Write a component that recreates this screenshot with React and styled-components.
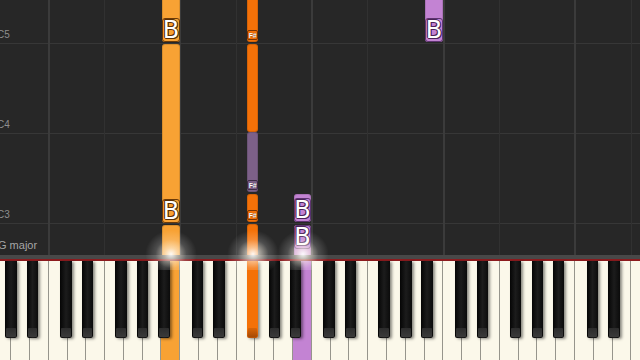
import React from "react";
import styled, { createGlobalStyle } from "styled-components";

// key geometry, measured off the reference
const W = 18.8;
const X0 = -7.7;
const NAMES = ["G", "A", "B", "C", "D", "E", "F"];
const BLACK_SHIFT = { G: 0, A: 2.4, C: -1.5, D: 1.2, F: -3 };
const BW = 11.5;

const ORANGE = { fill: "#f8a234", edge: "#6b3a08", ink: "#5a3006" };
const DARK = { fill: "#f47108", edge: "#7a3300", ink: "#4a1e00" };
const MAUVE = { fill: "#7c6088", edge: "#3e2c46", ink: "#2c1e33" };
const PURPLE = { fill: "#c383d3", edge: "#5e3470", ink: "#4a2458" };

const wx = (i) => X0 + i * W;
const bx = (i) => wx(i + 1) + BLACK_SHIFT[NAMES[i % 7]] - BW / 2;

const notes = [
  { x: wx(9), w: W, top: -6, bottom: 42, c: ORANGE, tag: "B" },
  { x: wx(9), w: W, top: 44, bottom: 223, c: ORANGE, tag: "B" },
  { x: wx(9), w: W, top: 225, bottom: 262, c: ORANGE },
  { x: bx(13), w: BW, top: -6, bottom: 42, c: DARK, small: "F#" },
  { x: bx(13), w: BW, top: 44, bottom: 132, c: DARK },
  { x: bx(13), w: BW, top: 132, bottom: 192, c: MAUVE, small: "F#" },
  { x: bx(13), w: BW, top: 194, bottom: 222, c: DARK, small: "F#" },
  { x: bx(13), w: BW, top: 224, bottom: 262, c: DARK },
  { x: wx(16), w: W, top: 194, bottom: 222, c: PURPLE, tag: "B" },
  { x: wx(16), w: W, top: 225, bottom: 262, c: PURPLE, tag: "B", tagTop: true },
  { x: wx(23), w: W, top: -6, bottom: 42, c: PURPLE, tag: "B" },
];

const lit = { 9: ORANGE.fill, 16: PURPLE.fill };
const litBlack = { 13: DARK.fill };

const glows = [wx(9) + W / 2, bx(13) + BW / 2, wx(16) + W / 2];

const bands = [
  { h: 44, label: "C5" },
  { h: 90, label: "C4" },
  { h: 90, label: "C3" },
];

const GlobalStyle = createGlobalStyle`
  html, body { margin: 0; padding: 0; background: #262626; }
  body { font-family: "Liberation Sans", Arial, sans-serif; }
`;

const Stage = styled.div`
  position: relative;
  width: 640px;
  height: 360px;
  overflow: hidden;
  display: flex;
  flex-direction: column;
  background: #272727;
`;

const Roll = styled.div`
  position: relative;
  flex: 0 0 255px;
  overflow: hidden;
`;

const Bands = styled.div`
  position: absolute;
  inset: 0;
  display: flex;
  flex-direction: column;
`;

const Band = styled.div`
  flex: 0 0 ${(p) => (p.$h ? `${p.$h}px` : "auto")};
  ${(p) => !p.$h && "flex: 1;"}
  box-sizing: border-box;
  display: flex;
  align-items: flex-end;
  border-bottom: ${(p) => (p.$h ? "1px solid #373737" : "none")};
  padding: 0 0 ${(p) => (p.$h ? 3 : 4)}px 0;
`;

const RowLabel = styled.span`
  margin-left: -3px;
  font-size: 10px;
  color: #8e8e8e;
  line-height: 1;
`;

const KeyName = styled.span`
  margin-left: -2px;
  font-size: 11px;
  color: #a6a6a6;
  line-height: 1;
`;

const VLine = styled.div`
  position: absolute;
  top: 0;
  bottom: 0;
  width: ${(p) => (p.$strong ? 2 : 1)}px;
  background: ${(p) => (p.$strong ? "#3b3b3b" : "#313131")};
`;

const Note = styled.div`
  position: absolute;
  box-sizing: border-box;
  border-radius: 3px;
  background: ${(p) => p.$c.fill};
  box-shadow: inset 0 0 0 1px rgba(0, 0, 0, 0.12);
`;

const Tag = styled.div`
  position: absolute;
  left: 0;
  right: 0;
  ${(p) => (p.$top ? "top: 0;" : "bottom: 0;")}
  height: 24px;
  box-sizing: border-box;
  border: 1.5px solid ${(p) => p.$c.edge};
  border-radius: 3px;
  background: ${(p) => p.$c.fill};
  display: flex;
  align-items: center;
  justify-content: center;
  font: 400 24px/1 "DejaVu Sans", sans-serif;
  color: #fff;
  text-shadow: 1px 0 0 ${(p) => p.$c.ink}, -1px 0 0 ${(p) => p.$c.ink},
    0 1px 0 ${(p) => p.$c.ink}, 0 -1px 0 ${(p) => p.$c.ink},
    1px 1px 0 ${(p) => p.$c.ink}, -1px -1px 0 ${(p) => p.$c.ink};
`;

const SmallTag = styled.div`
  position: absolute;
  left: 0;
  right: 0;
  bottom: 2px;
  height: 10px;
  box-sizing: border-box;
  border: 1px solid ${(p) => p.$c.edge};
  border-radius: 2px;
  background: ${(p) => p.$c.fill};
  display: flex;
  align-items: center;
  justify-content: center;
  font: 700 7px "Liberation Sans", sans-serif;
  letter-spacing: -0.3px;
  color: #fff;
  text-shadow: 0 0 1px ${(p) => p.$c.ink};
`;

const Strip = styled.div`
  flex: 0 0 4px;
  background: #484848;
  border-bottom: 2px solid #8c1b1e;
`;

const Keyboard = styled.div`
  position: relative;
  flex: 1;
  display: flex;
  background: #fbf8ea;
`;

const WhiteKey = styled.div`
  flex: 0 0 ${W}px;
  box-sizing: border-box;
  height: 100%;
  border-right: 1px solid #96958c;
  background: ${(p) => p.$lit || "#fbf8ea"};
  &:first-child {
    margin-left: ${X0}px;
  }
`;

const BlackKey = styled.div`
  position: absolute;
  top: 0;
  width: ${BW}px;
  height: 77px;
  border-radius: 0 0 2px 2px;
  background: ${(p) =>
    p.$lit
      ? `linear-gradient(${p.$lit}, ${p.$lit} 88%, #b85206)`
      : "linear-gradient(90deg, #050505, #1c1c1c 50%, #0b0b0b)"};
  box-shadow: 2px 1px 3px rgba(0, 0, 0, 0.45);
  &::after {
    content: "";
    position: absolute;
    left: 1px;
    right: 1px;
    bottom: 1px;
    height: 9px;
    border-radius: 1px;
    background: ${(p) =>
      p.$lit ? "rgba(0,0,0,0.12)" : "linear-gradient(#2c2c2c, #3a3a3a)"};
  }
`;

const Glow = styled.div`
  position: absolute;
  top: 230px;
  width: 52px;
  height: 40px;
  margin-left: -26px;
  pointer-events: none;
  background: radial-gradient(
    ellipse at 50% 60%,
    rgba(255, 255, 255, 0.95) 0,
    rgba(255, 248, 235, 0.6) 18%,
    rgba(255, 255, 255, 0.18) 42%,
    rgba(255, 255, 255, 0) 70%
  );
`;

function PianoRoll() {
  const whites = Array.from({ length: 36 }, (_, i) => i);
  const blacks = whites.filter((i) => BLACK_SHIFT[NAMES[i % 7]] !== undefined);

  return (
    <Stage>
      <Roll>
        <Bands>
          {bands.map((b) => (
            <Band key={b.label} $h={b.h}>
              <RowLabel>{b.label}</RowLabel>
            </Band>
          ))}
          <Band>
            <KeyName>G major</KeyName>
          </Band>
        </Bands>
        {whites
          .filter((i) => NAMES[i % 7] === "C" || NAMES[i % 7] === "F")
          .map((i) => (
            <VLine
              key={i}
              $strong={NAMES[i % 7] === "C"}
              style={{ left: wx(i) - 1 }}
            />
          ))}
        {notes.map((n, k) => (
          <Note
            key={k}
            $c={n.c}
            style={{
              left: n.x + 0.5,
              width: n.w - 1,
              top: n.top,
              height: n.bottom - n.top,
            }}
          >
            {n.tag && (
              <Tag $c={n.c} $top={n.tagTop}>
                {n.tag}
              </Tag>
            )}
            {n.small && <SmallTag $c={n.c}>{n.small}</SmallTag>}
          </Note>
        ))}
      </Roll>
      <Strip />
      <Keyboard>
        {whites.map((i) => (
          <WhiteKey key={i} $lit={lit[i]} />
        ))}
        {blacks.map((i) => (
          <BlackKey key={i} $lit={litBlack[i]} style={{ left: bx(i) }} />
        ))}
      </Keyboard>
      {glows.map((x) => (
        <Glow key={x} style={{ left: x }} />
      ))}
    </Stage>
  );
}

export default function App() {
  return (
    <>
      <GlobalStyle />
      <PianoRoll />
    </>
  );
}
